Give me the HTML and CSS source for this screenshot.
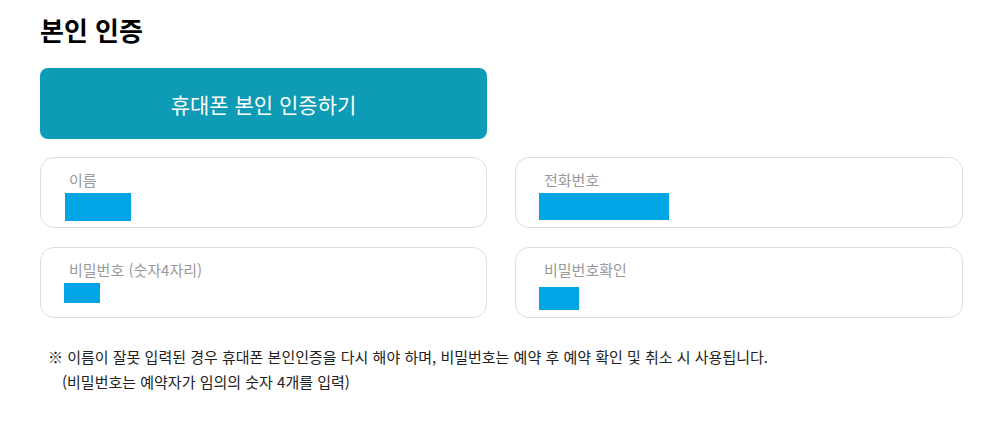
FILE: index.html
```html
<!DOCTYPE html>
<html lang="ko">
<head>
    <meta charset="UTF-8">
    <meta name="viewport" content="width=device-width, initial-scale=1.0">
    <title>본인 인증</title>
    <link rel="stylesheet" href="styles.css">
</head>
<body>
    <div class="content">
        <h2 class="title">본인 인증</h2>

        <button class="cert-button" type="button">휴대폰 본인 인증하기</button>

        <div class="field-grid">
            <div class="field">
                <label>이름</label>
                <div class="mask mask-name"></div>
            </div>
            <div class="field">
                <label>전화번호</label>
                <div class="mask mask-phone"></div>
            </div>
            <div class="field">
                <label>비밀번호 (숫자4자리)</label>
                <div class="mask mask-pw"></div>
            </div>
            <div class="field">
                <label>비밀번호확인</label>
                <div class="mask mask-pw-check"></div>
            </div>
        </div>

        <p class="notice">
            ※ 이름이 잘못 입력된 경우 휴대폰 본인인증을 다시 해야 하며, 비밀번호는 예약 후 예약 확인 및 취소 시 사용됩니다.<br>
            <span class="notice-sub">(비밀번호는 예약자가 임의의 숫자 4개를 입력)</span>
        </p>
    </div>
</body>
</html>
```

FILE: styles.css
```css
body {
    margin: 0;
    padding: 0;
    font-family: "Noto Sans CJK KR", "Noto Sans", sans-serif;
    color: #111;
    background: #fff;
}

.content {
    width: 923px;
    padding: 0 40px;
}

.title {
    margin: 0;
    padding-top: 12px;
    font-size: 26px;
    line-height: 36px;
    font-weight: 700;
    color: #000;
}

.cert-button {
    display: block;
    width: 447px;
    height: 71px;
    margin-top: 20px;
    border: none;
    border-radius: 8px;
    background-color: #0e9bb6;
    color: #fff;
    font-family: inherit;
    font-size: 21px;
    cursor: pointer;
}

.field-grid {
    display: grid;
    grid-template-columns: 447px 448px;
    column-gap: 28px;
    row-gap: 19px;
    margin-top: 18px;
}

.field {
    box-sizing: border-box;
    height: 71px;
    padding: 11px 23px 0;
    border: 1px solid #ddd;
    border-radius: 14px;
}

.field label {
    display: block;
    height: 24px;
    padding-left: 5px;
    font-size: 15px;
    line-height: 22px;
    color: #999;
}

.mask {
    background-color: #00a5e6;
}

.mask-name {
    width: 66px;
    height: 28px;
    margin-left: 1px;
}

.mask-phone {
    width: 130px;
    height: 27px;
}

.mask-pw {
    width: 36px;
    height: 20px;
}

.mask-pw-check {
    width: 40px;
    height: 23px;
    margin-top: 4px;
}

.notice {
    margin: 26px 0 0 8px;
    font-size: 15px;
    line-height: 25px;
    color: #222;
}

.notice-sub {
    padding-left: 14px;
}
```
